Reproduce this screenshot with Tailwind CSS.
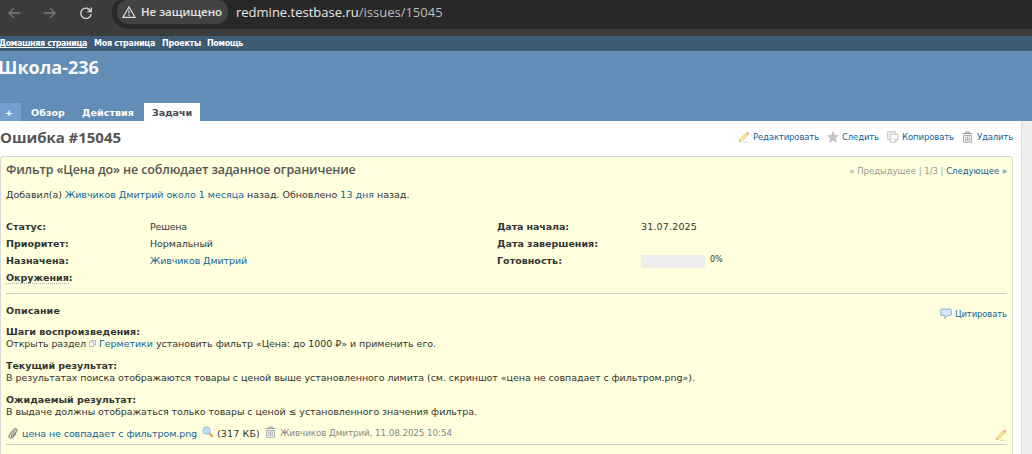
<!DOCTYPE html>
<html lang="ru">
<head>
<meta charset="utf-8">
<title>Ошибка #15045</title>
<script src="https://cdn.jsdelivr.net/npm/@tailwindcss/browser@4"></script>
</head>
<body class="w-[1032px] h-[454px] overflow-hidden bg-white font-['DejaVu_Sans',sans-serif] text-[9.5px] leading-[17px] text-[#333] whitespace-nowrap">
<svg class="hidden">
  <symbol id="pencil" viewBox="0 0 12 12"><path d="M1.200 10.600 2 8 8 2 10 4 4 10Z" fill="#f8e08c" stroke="#e0bd68" stroke-width=".6"/><path d="m3 9 5.800-5.800" stroke="#fff2b0" stroke-width=".8"/><path d="M8 2 9 1q.8-.5 1.500.2t.4 1.700L10 4Z" fill="#f0a59c"/><path d="m1 11 .4-1.500 1 1Z" fill="#888"/><path d="M4.500 11.300h6" stroke="#aaa" stroke-opacity=".5" stroke-width=".7"/></symbol>
  <symbol id="trash" viewBox="0 0 11 12"><path d="M.5 2.500h10M3.700 2V1h3.600v1" fill="none" stroke="#9a9aa4"/><path d="M1.500 4.500h8v6.800h-8Z" fill="#f1f1f4" stroke="#a2a2ac" stroke-width=".9"/><path d="M3.700 5.500v4.500M5.500 5.500v4.500M7.300 5.500v4.500" stroke="#9a9aa4" stroke-width=".8"/></symbol>
</svg>
<header class="h-9 bg-[#3c3c3c] flex">
  <div class="w-28 h-[25px] flex items-center">
    <svg class="ml-2 w-3 h-3" viewBox="0 0 12 12" fill="none" stroke="#7b7b7b" stroke-width="1.3"><path d="M12 6H1M6 1 1 6l5 5"/></svg>
    <svg class="ml-6 w-3 h-3" viewBox="0 0 12 12" fill="none" stroke="#7b7b7b" stroke-width="1.3"><path d="M0 6h11M6 1l5 5-5 5"/></svg>
    <svg class="ml-6 w-3 h-3" viewBox="0 0 12 12" fill="none" stroke="#d5d5d5" stroke-width="1.4"><path d="M10.800 4.200A5.200 5.200 0 1 0 11.200 7M11.300.5v4H7.400"/></svg>
  </div>
  <div class="w-[920px] h-[29px] rounded-bl-[16px] rounded-tl-[10px] bg-[#282828] flex">
    <div class="ml-[5px] w-[111px] h-6 rounded-b-xl rounded-t-[10px] bg-[#434343] flex items-center">
      <svg class="ml-[5px] w-[14px] h-3" viewBox="0 0 14 12" fill="none" stroke="#dcdcdc" stroke-width="1.2"><path d="M7 1 13 11.300H1ZM7 4.300v3.500M7 8.800v1.300"/></svg>
      <span class="ml-[5px] font-['Open_Sans',sans-serif] font-semibold text-[11.5px] leading-[15px] pb-[2px] tracking-[-0.03px] text-[#e3e3e3]">Не защищено</span>
    </div>
    <div class="ml-[8px] pt-[3px] font-['Open_Sans',sans-serif] text-[13px] leading-[18px] text-[#e8e8e8]">redmine.testbase.ru<span class="text-[#bdbdbd]">/issues/15045</span></div>
  </div>
</header>
<nav class="h-[15px] bg-[#3e5b76] text-white font-bold text-[8px] leading-[15px] flex">
  <span class="-ml-px w-[95px] tracking-[-0.389px] underline">Домашняя страница</span><span class="w-[68px] tracking-[-0.279px]">Моя страница</span><span class="w-[45px] tracking-[-0.237px]">Проекты</span><span class="tracking-[-0.357px]">Помощь</span>
</nav>
<section class="h-[70px] bg-[#628db6] text-white flex flex-col justify-between">
  <h1 class="-ml-[2px] h-8 leading-8 font-['Open_Sans',sans-serif] font-bold text-[18px] text-[#f8f8f8]">Школа-236</h1>
  <div class="h-[18px] flex font-bold leading-[19px]">
    <span class="w-[21px] bg-[#759fcf] pl-[5px]">+</span>
    <span class="ml-[10px] w-[51px] tracking-[0.087px]">Обзор</span><span class="w-[62px] tracking-[0.066px]">Действия</span>
    <span class="w-14 pl-2 bg-white text-[#484848] tracking-[-0.07px]">Задачи</span>
  </div>
</section>
<div class="flex h-[333px]">
<main class="w-[1021px] pr-2">
  <div class="h-[35px] flex items-center text-[8.5px] text-[#116699]">
    <h2 class="w-[738px] h-[35px] leading-[33px] font-['Open_Sans',sans-serif] font-bold text-[15px] tracking-[-0.034px] text-[#555]">Ошибка #15045</h2>
    <svg class="w-3 h-3 -mt-1"><use href="#pencil"/></svg><span class="ml-[3px] w-[74px] -mt-[3px] tracking-[-0.14px]">Редактировать</span>
    <svg class="w-3 h-3 -mt-1" viewBox="0 0 12 12"><path d="m6 .5 1.600 3.700 4 .4-3 2.700.9 4L6 9.200l-3.500 2.100.9-4-3-2.700 4-.4Z" fill="#c4c4c4" stroke="#b0b0b0" stroke-width=".4"/></svg><span class="ml-[3px] w-[45px] -mt-[3px] tracking-[-0.14px]">Следить</span>
    <svg class="w-3 h-3 -mt-1" viewBox="0 0 12 12" stroke="#b9bdc4" stroke-width=".8"><path d="M.6.6h7.800v7.800H.6Z" fill="#f3f3f3"/><path d="M3.200 3.200h7.800v5.400L8.600 11.300H3.200Z" fill="#fafafa"/><path d="M8.300 11V8.500h2.500" fill="none"/></svg><span class="ml-[3px] w-[60px] -mt-[3px] tracking-[-0.11px]">Копировать</span>
    <svg class="w-[11px] h-3 -mt-1"><use href="#trash"/></svg><span class="ml-1 -mt-[3px] tracking-[-0.17px]">Удалить</span>
  </div>
  <article class="h-[310px] rounded-t-[3px] border border-[#d7d7d7] bg-[#ffffdd] pl-[5px] pr-[5px] pt-[3px]">
    <div class="flex justify-between h-[26px]">
      <h3 class="leading-5 font-['Open_Sans',sans-serif] font-semibold text-[12.5px] tracking-[-0.128px] text-[#555]">Фильтр «Цена до» не соблюдает заданное ограничение</h3>
      <div class="text-[8.5px] leading-[22px] text-[#999] tracking-[-0.015px]">« Предыдущее | 1/3 | <span class="text-[#116699]">Следующее »</span></div>
    </div>
    <p class="tracking-[-0.006px]">Добавил(а) <a class="text-[#116699]">Живчиков Дмитрий</a> <a class="text-[#116699]">около 1 месяца</a> назад. Обновлено <a class="text-[#116699]">13 дня</a> назад.</p>
    <div class="mt-[15px] flex h-[75px]">
      <div class="w-36 font-bold tracking-[0.01px]"><p>Статус:</p><p>Приоритет:</p><p>Назначена:</p><p><span class="border-b border-dotted border-[#aaa]">Окружения</span>:</p></div>
      <div class="w-[347px]"><p class="tracking-[-0.19px]">Решена</p><p class="tracking-[-0.054px]">Нормальный</p><p class="text-[#116699] tracking-[-0.1px]">Живчиков Дмитрий</p></div>
      <div class="w-36 font-bold"><p class="tracking-[-0.1px]">Дата начала:</p><p class="tracking-[0.004px]">Дата завершения:</p><p class="tracking-[0.03px]">Готовность:</p></div>
      <div><p class="h-[37px] tracking-[0.16px]">31.07.2025</p><div class="flex -mt-[2px]"><div class="mt-[2px] w-16 h-[13px] bg-[#eee]"></div><span class="ml-[5px] mt-[2px] text-[8px] leading-[9px]">0%</span></div></div>
    </div>
    <div class="border-t border-[#ccc] h-[33px] flex justify-between pt-2">
      <b class="tracking-[0.12px]">Описание</b>
      <div class="flex h-[23px] items-center text-[8.5px] text-[#116699]"><svg class="w-3 h-3" viewBox="0 0 12 12"><path d="M2 1h8q1.400 0 1.400 1.500v3.600q0 1.400-1.400 1.400H7.500L4.800 10.400V7.500H2Q.6 7.500.6 6.100V2.500Q.6 1 2 1Z" fill="#d5e7fa" stroke="#8aa7c6" stroke-width=".9"/></svg><span class="ml-[3px] mt-px w-[52px] tracking-[-0.138px]">Цитировать</span></div>
    </div>
    <div class="leading-[12px] flex flex-col gap-[10px]">
      <p><b class="tracking-[0.047px]">Шаги воспроизведения:</b><br><span class="tracking-[-0.13px]">Открыть раздел</span><svg class="inline-block align-baseline ml-[3px] mr-[3px] w-[7px] h-[7px]" viewBox="0 0 7 7" fill="#fff" stroke="#aaa" stroke-width=".8"><path d="M.5 2h4.300v4.500H.5Z"/><path d="M2 .5h4.500V5H4.800V2H2Z"/></svg><span class="tracking-[-0.041px]"><span class="text-[#116699]">Герметики</span> установить фильтр «Цена: до 1000 ₽» и применить его.</span></p>
      <p><b class="tracking-[-0.045px]">Текущий результат:</b><br><span class="tracking-[-0.057px]">В результатах поиска отображаются товары с ценой выше установленного лимита (см. скриншот «цена не совпадает с фильтром.png»).</span></p>
      <p><b class="tracking-[-0.01px]">Ожидаемый результат:</b><br><span class="tracking-[-0.073px]">В выдаче должны отображаться только товары с ценой ≤ установленного значения фильтра.</span></p>
    </div>
    <div class="mt-[7px] h-[20px] border-b border-[#ccc] flex items-start">
      <svg class="mt-[2px] ml-[2px] w-[10px] h-3" viewBox="0 0 10 12" fill="none" stroke="#8a8a8a" stroke-width="1.2"><path d="m7.500 3-4 5q-.6 1 .2 1.400.6.300 1.200-.4L8.700 4.300q.8-1.500-.4-2.400-1.300-.9-2.500.4L1.500 7.500q-1.200 2 .3 3.200 1.700 1 3-.5L8 6.500"/></svg>
      <span class="ml-1 w-[180px] text-[#116699] tracking-[-0.085px]">цена не совпадает с фильтром.png</span>
      <svg class="mt-px w-3 h-3" viewBox="0 0 12 12"><path d="m7 7 3.700 3.700" stroke="#c99b6b" stroke-width="2"/><circle cx="4.500" cy="4.500" r="3.700" fill="#b9dcf8" stroke="#9fbfe0"/></svg>
      <span class="ml-[3px] w-[48px] tracking-[0.14px]">(317 КБ)</span>
      <svg class="mt-px w-[11px] h-3"><use href="#trash"/></svg>
      <span class="ml-1 text-[8.8px] text-[#888] tracking-[-0.105px]">Живчиков Дмитрий, 11.08.2025 10:54</span>
      <svg class="ml-auto mt-[4px] w-3 h-3"><use href="#pencil"/></svg>
    </div>
  </article>
</main>
<aside class="w-[11px] border-l border-[#ddd] bg-[#eee]"></aside>
</div>
</body>
</html>
